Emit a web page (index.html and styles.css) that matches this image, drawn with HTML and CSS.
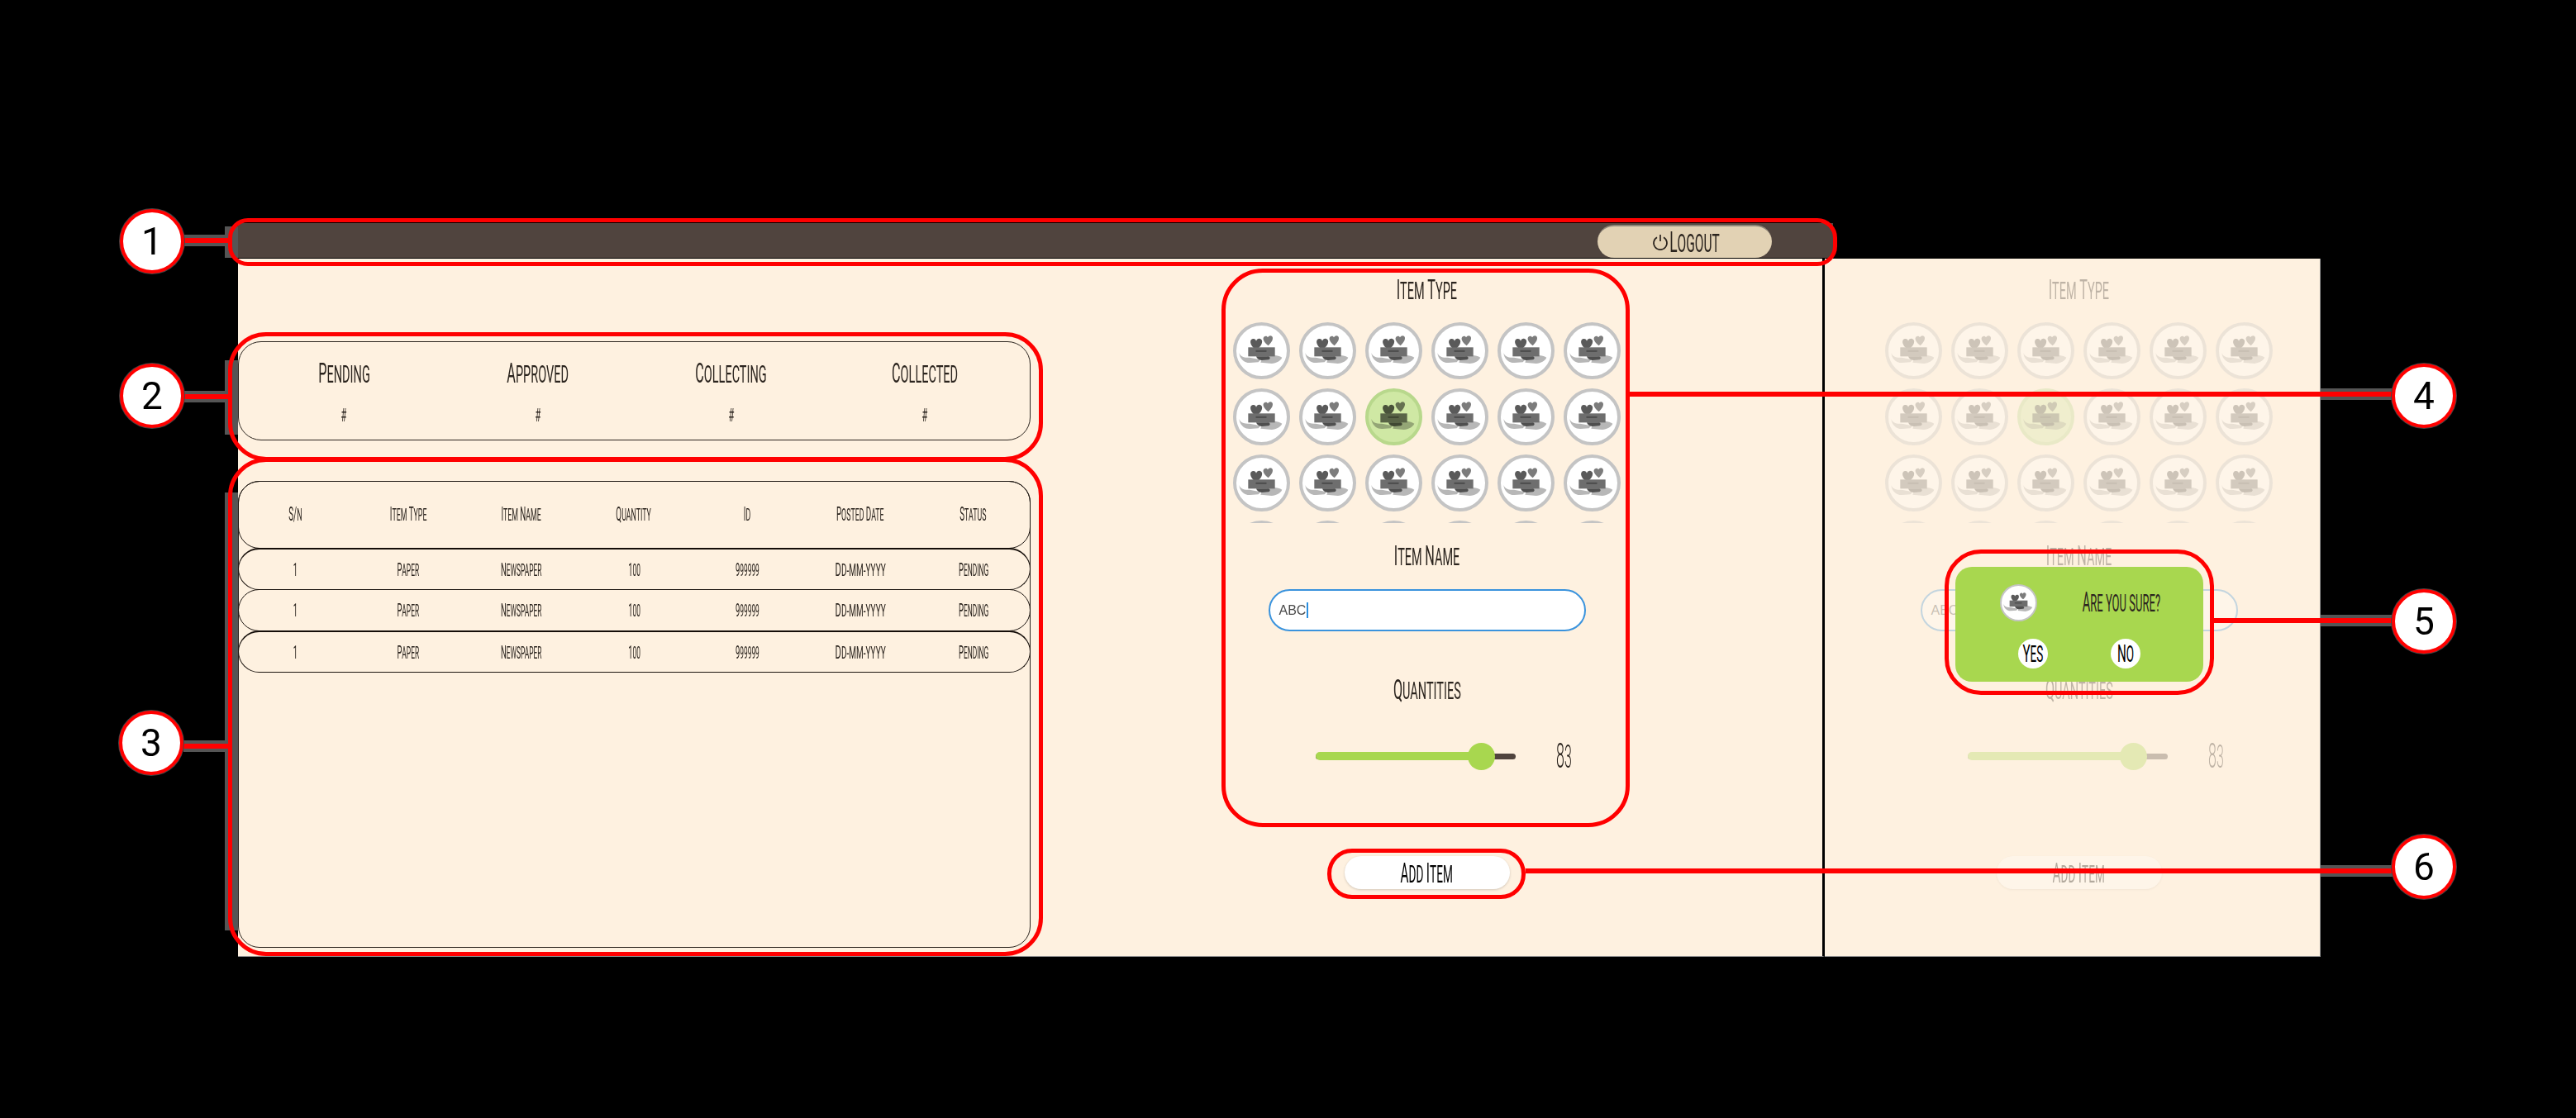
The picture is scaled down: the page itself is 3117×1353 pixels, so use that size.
FILE: index.html
```html
<!DOCTYPE html>
<html lang="en">
<head>
  <meta charset="UTF-8" />
  <title>Recycling - Add Item</title>
  <link rel="stylesheet" href="styles.css">
</head>
<body>
  <svg class="defs" width="0" height="0" aria-hidden="true">
    <symbol id="item-icon" viewBox="12 12 183 183">
      <path fill="#b7b7b7" d="M22 110C26 124 40 130 60 128L100 136 92 145 62 147C42 148 24 134 22 110Z" />
      <path fill="#b7b7b7" d="M178 128C165 120 150 118 132 122L105 132 100 146 140 150C158 148 172 140 178 128Z" />
      <path fill="#5a5a5a" d="M84 100C60 85 58 62 72 60 79 59 83 63 84 68 86 62 92 58 98 60 112 64 106 86 84 100Z" />
      <path fill="#7c7c7c" d="M128 85C112 72 106 60 112 53 118 48 124 50 126 55 130 48 138 47 142 52 148 60 140 74 128 85Z" />
      <rect fill="#6e6e6e" x="55" y="91" width="97" height="33" />
      <rect fill="#4f4f4f" x="82" y="101" width="40" height="7" rx="3" />
      <path fill="#4f4f4f" d="M84 124H128C136 126 136 134 128 136L104 138C94 138 86 132 84 124Z" />
    </symbol>
  </svg>

  <!-- grey fringe round the callouts, only shows on the black part -->
  <div class="halo halo-box-1"></div>
  <div class="halo halo-bar-end"></div>
  <div class="halo halo-box-2"></div>
  <div class="halo halo-box-3"></div>
  <div class="halo halo-line-1"></div>
  <div class="halo halo-line-2"></div>
  <div class="halo halo-line-3"></div>
  <div class="halo halo-line-4"></div>
  <div class="halo halo-line-5"></div>
  <div class="halo halo-line-6"></div>

  <main class="stage">
    <header class="topbar">
      <button class="logout">
        <svg class="power" viewBox="0 0 20 20" aria-hidden="true">
          <path d="M6 4.2A8 8 0 1 0 14 4.2" />
          <path d="M10 1V9" />
        </svg>
        <span class="label-box"><span class="hand hand-logout">Logout</span></span>
      </button>
    </header>
    <div class="topbar-gap"></div>

    <section class="screen screen-main">
      <div class="left-col">
        <div class="stats">
          <div class="stat"><span class="hand hand-lg">Pending</span><span class="hand hand-num">#</span></div>
          <div class="stat"><span class="hand hand-lg">Approved</span><span class="hand hand-num">#</span></div>
          <div class="stat"><span class="hand hand-lg">Collecting</span><span class="hand hand-num">#</span></div>
          <div class="stat"><span class="hand hand-lg">Collected</span><span class="hand hand-num">#</span></div>
        </div>

        <div class="table-box">
          <div class="row row-head">
            <span class="hand hand-head">S/N</span>
            <span class="hand hand-head">Item <span class="cap">T</span>ype</span>
            <span class="hand hand-head">Item <span class="cap">N</span>ame</span>
            <span class="hand hand-head">Quantity</span>
            <span class="hand hand-head">ID</span>
            <span class="hand hand-head">Posted <span class="cap">D</span>ate</span>
            <span class="hand hand-head">Status</span>
          </div>
          <div class="row row-strong">
            <span class="hand hand-cell">1</span>
            <span class="hand hand-cell">Paper</span>
            <span class="hand hand-cell">Newspaper</span>
            <span class="hand hand-cell">100</span>
            <span class="hand hand-cell">999999</span>
            <span class="hand hand-cell hand-date">DD-MM-YYYY</span>
            <span class="hand hand-cell">Pending</span>
          </div>
          <div class="row">
            <span class="hand hand-cell">1</span>
            <span class="hand hand-cell">Paper</span>
            <span class="hand hand-cell">Newspaper</span>
            <span class="hand hand-cell">100</span>
            <span class="hand hand-cell">999999</span>
            <span class="hand hand-cell hand-date">DD-MM-YYYY</span>
            <span class="hand hand-cell">Pending</span>
          </div>
          <div class="row row-strong">
            <span class="hand hand-cell">1</span>
            <span class="hand hand-cell">Paper</span>
            <span class="hand hand-cell">Newspaper</span>
            <span class="hand hand-cell">100</span>
            <span class="hand hand-cell">999999</span>
            <span class="hand hand-cell hand-date">DD-MM-YYYY</span>
            <span class="hand hand-cell">Pending</span>
          </div>
        </div>
      </div>

      <div class="form">
        <div class="field-title title-type"><span class="hand hand-lg">Item <span class="cap">T</span>ype</span></div>
        <div class="icon-grid">
          <div class="type"><svg><use href="#item-icon" /></svg></div>
          <div class="type"><svg><use href="#item-icon" /></svg></div>
          <div class="type"><svg><use href="#item-icon" /></svg></div>
          <div class="type"><svg><use href="#item-icon" /></svg></div>
          <div class="type"><svg><use href="#item-icon" /></svg></div>
          <div class="type"><svg><use href="#item-icon" /></svg></div>
          <div class="type"><svg><use href="#item-icon" /></svg></div>
          <div class="type"><svg><use href="#item-icon" /></svg></div>
          <div class="type selected"><svg><use href="#item-icon" /></svg></div>
          <div class="type"><svg><use href="#item-icon" /></svg></div>
          <div class="type"><svg><use href="#item-icon" /></svg></div>
          <div class="type"><svg><use href="#item-icon" /></svg></div>
          <div class="type"><svg><use href="#item-icon" /></svg></div>
          <div class="type"><svg><use href="#item-icon" /></svg></div>
          <div class="type"><svg><use href="#item-icon" /></svg></div>
          <div class="type"><svg><use href="#item-icon" /></svg></div>
          <div class="type"><svg><use href="#item-icon" /></svg></div>
          <div class="type"><svg><use href="#item-icon" /></svg></div>
          <div class="type"></div><div class="type"></div><div class="type"></div>
          <div class="type"></div><div class="type"></div><div class="type"></div>
        </div>
        <div class="field-title title-name"><span class="hand hand-lg">Item <span class="cap">N</span>ame</span></div>
        <div class="input"><span>ABC</span><i class="caret"></i></div>
        <div class="field-title title-qty"><span class="hand hand-lg">Quantities</span></div>
        <div class="slider-row">
          <div class="track">
            <div class="fill" style="width: 83%"></div>
            <div class="thumb" style="left: 83%"></div>
          </div>
          <div class="qty"><span class="hand hand-qty">83</span></div>
        </div>
        <button class="add-btn"><span class="hand hand-add">Add <span class="cap">I</span>tem</span></button>
      </div>
    </section>

    <section class="screen screen-confirm">
      <div class="form form-dim">
        <div class="field-title title-type"><span class="hand hand-lg">Item <span class="cap">T</span>ype</span></div>
        <div class="icon-grid">
          <div class="type"><svg><use href="#item-icon" /></svg></div>
          <div class="type"><svg><use href="#item-icon" /></svg></div>
          <div class="type"><svg><use href="#item-icon" /></svg></div>
          <div class="type"><svg><use href="#item-icon" /></svg></div>
          <div class="type"><svg><use href="#item-icon" /></svg></div>
          <div class="type"><svg><use href="#item-icon" /></svg></div>
          <div class="type"><svg><use href="#item-icon" /></svg></div>
          <div class="type"><svg><use href="#item-icon" /></svg></div>
          <div class="type selected"><svg><use href="#item-icon" /></svg></div>
          <div class="type"><svg><use href="#item-icon" /></svg></div>
          <div class="type"><svg><use href="#item-icon" /></svg></div>
          <div class="type"><svg><use href="#item-icon" /></svg></div>
          <div class="type"><svg><use href="#item-icon" /></svg></div>
          <div class="type"><svg><use href="#item-icon" /></svg></div>
          <div class="type"><svg><use href="#item-icon" /></svg></div>
          <div class="type"><svg><use href="#item-icon" /></svg></div>
          <div class="type"><svg><use href="#item-icon" /></svg></div>
          <div class="type"><svg><use href="#item-icon" /></svg></div>
          <div class="type"></div><div class="type"></div><div class="type"></div>
          <div class="type"></div><div class="type"></div><div class="type"></div>
        </div>
        <div class="field-title title-name"><span class="hand hand-lg">Item <span class="cap">N</span>ame</span></div>
        <div class="input"><span>ABC</span></div>
        <div class="field-title title-qty"><span class="hand hand-lg">Quantities</span></div>
        <div class="slider-row">
          <div class="track">
            <div class="fill" style="width: 83%"></div>
            <div class="thumb" style="left: 83%"></div>
          </div>
          <div class="qty"><span class="hand hand-qty">83</span></div>
        </div>
        <button class="add-btn"><span class="hand hand-add">Add <span class="cap">I</span>tem</span></button>
      </div>

      <div class="dialog">
        <div class="dialog-top">
          <div class="type type-small"><svg><use href="#item-icon" /></svg></div>
          <div class="dialog-text"><span class="hand hand-lg hand-ask">Are you sure?</span></div>
        </div>
        <div class="dialog-actions">
          <button class="round-btn"><span class="hand hand-round">Yes</span></button>
          <button class="round-btn"><span class="hand hand-round">No</span></button>
        </div>
      </div>
    </section>
  </main>

  <!-- red callouts drawn over the screens -->
  <div class="box box-1"></div>
  <div class="box box-2"></div>
  <div class="box box-3"></div>
  <div class="box box-4"></div>
  <div class="box box-5"></div>
  <div class="box box-6"></div>
  <div class="line line-1"></div>
  <div class="line line-2"></div>
  <div class="line line-3"></div>
  <div class="line line-4"></div>
  <div class="line line-5"></div>
  <div class="line line-6"></div>
  <div class="pin pin-1">1</div>
  <div class="pin pin-2">2</div>
  <div class="pin pin-3">3</div>
  <div class="pin pin-4">4</div>
  <div class="pin pin-5">5</div>
  <div class="pin pin-6">6</div>
</body>
</html>
```

FILE: styles.css
```css
* {
  box-sizing: border-box;
}

body {
  margin: 0;
  width: 3117px;
  height: 1353px;
  position: relative;
  overflow: hidden;
  background: #000;
  font-family: Roboto, sans-serif;
  color: #2b241e;
}

.defs {
  position: absolute;
}

button {
  font-family: inherit;
  color: inherit;
  border: none;
  padding: 0;
}

/* narrow hand lettering: squeezed capitals */
.hand {
  display: inline-block;
  white-space: nowrap;
  text-transform: uppercase;
  transform: scaleX(0.5);
  line-height: 1;
}

.hand::first-letter,
.cap {
  font-size: 1.12em;
}

.hand-lg {
  font-size: 29px;
}

.hand-ask {
  transform: scaleX(0.45);
}

.hand-num {
  font-size: 22px;
}

.hand-head {
  font-size: 21px;
  transform: scaleX(0.42);
}

.hand-cell {
  font-size: 20px;
  transform: scaleX(0.42);
}

.hand-date {
  transform: scaleX(0.5);
}

.hand-qty {
  font-size: 38px;
  font-weight: 300;
  transform: scaleX(0.42);
}

.hand-add {
  font-size: 29px;
  color: #000;
  transform: scaleX(0.47);
}

.hand-logout {
  font-size: 31px;
}

.hand-round {
  font-size: 27px;
  color: #000;
}

.stage {
  position: relative;
  z-index: 1;
  display: grid;
  grid-template-columns: 1920px 600px;
  grid-template-rows: 43px 845px;
  padding: 270px 0 0 288px;
}

.topbar {
  display: flex;
  justify-content: flex-end;
  align-items: flex-end;
  padding-right: 64px;
  background: #50443e;
  border-bottom: 1px solid #000;
}

.logout {
  display: flex;
  align-items: center;
  justify-content: center;
  gap: 4px;
  width: 211px;
  height: 40px;
  background: #e2d2b4;
  border-top: 2px solid #8f8779;
  border-radius: 20px;
}

.power {
  width: 20px;
  height: 20px;
  fill: none;
  stroke: #2b241e;
  stroke-width: 1.7;
}

.label-box {
  display: flex;
  justify-content: center;
  width: 55px;
}

.screen {
  position: relative;
  background: #fef1e0;
  border-bottom: 1px solid #8f8f8f;
}

.screen-main {
  display: grid;
  grid-template-columns: 960px 1fr;
  border-right: 3px solid #000;
}

.screen-confirm {
  border-right: 1px solid #8f8f8f;
  padding-left: 16px;
}

.left-col {
  display: flex;
  flex-direction: column;
  padding: 100px 1px 10px 0;
}

.stats {
  display: grid;
  grid-template-columns: repeat(4, 1fr);
  height: 120px;
  padding: 0 10px;
  border: 1px solid #2b241e;
  border-radius: 28px;
}

.stat {
  display: flex;
  flex-direction: column;
  align-items: center;
  gap: 24px;
  padding-top: 22px;
}

.table-box {
  flex: 1;
  margin-top: 49px;
  border: 1px solid #2b241e;
  border-radius: 26px;
}

.row {
  display: grid;
  grid-template-columns: repeat(7, 1fr);
  align-items: center;
  justify-items: center;
  height: 51px;
  margin: -1px -1px 0;
  border: 1px solid #1c1510;
  border-radius: 26px;
}

.row-head {
  height: 82px;
  margin-top: -1px;
}

.row-strong {
  border-top: 2px solid #140d08;
}

.form {
  display: flex;
  flex-direction: column;
  align-items: center;
}

.form-dim {
  opacity: 0.3;
}

.field-title {
  display: flex;
  justify-content: center;
  align-items: center;
  height: 40px;
}

.title-type {
  margin-top: 18px;
}

.title-name {
  margin-top: 20px;
}

.title-qty {
  margin-top: 51px;
}

.icon-grid {
  display: grid;
  grid-template-columns: repeat(6, 69px);
  grid-auto-rows: 69px;
  gap: 11px;
  height: 243px;
  margin-top: 19px;
  overflow: hidden;
}

.type {
  width: 69px;
  height: 69px;
  background: #fff;
  border: 4px solid #c4c4c4;
  border-radius: 50%;
}

.type svg {
  display: block;
  width: 100%;
  height: 100%;
}

.type.selected {
  background: #cfe8a4;
  border-color: #b8d88c;
}

.type.selected svg {
  mix-blend-mode: multiply;
}

.type-small {
  width: 45px;
  height: 45px;
  border-width: 2px;
}

.input {
  display: flex;
  align-items: center;
  width: 384px;
  height: 51px;
  margin-top: 20px;
  padding-left: 11px;
  background: #fff;
  border: 2px solid #3a93dd;
  border-radius: 26px;
  font-family: "Liberation Sans", sans-serif;
  font-size: 16px;
  color: #4a4a4a;
}

.caret {
  width: 2px;
  height: 19px;
  margin-left: 1px;
  background: #2a8fe0;
}

.slider-row {
  display: flex;
  align-items: center;
  gap: 39px;
  width: 384px;
  height: 34px;
  margin-top: 43px;
  padding-left: 57px;
}

.track {
  position: relative;
  display: flex;
  align-items: center;
  width: 242px;
  height: 7px;
  background: #50443e;
  border-radius: 4px;
}

.fill {
  height: 10px;
  background: #a8d74f;
  border-radius: 5px 0 0 5px;
}

.thumb {
  position: absolute;
  top: -13px;
  width: 33px;
  height: 33px;
  margin-left: -16px;
  background: #a8d74f;
  border-radius: 50%;
}

.qty {
  display: flex;
  justify-content: center;
  width: 40px;
}

.add-btn {
  display: flex;
  justify-content: center;
  align-items: center;
  width: 200px;
  height: 40px;
  margin-top: 104px;
  padding-top: 2px;
  background: #fff;
  border-radius: 20px;
  box-shadow: 0 1px 3px rgb(0 0 0 / 0.18);
}

.dialog {
  position: absolute;
  left: 158px;
  top: 373px;
  width: 300px;
  height: 139px;
  padding-top: 21px;
  background: #a8d74f;
  border-radius: 20px;
}

.dialog-top {
  display: flex;
  align-items: center;
  padding-left: 54px;
}

.dialog-text {
  display: flex;
  justify-content: center;
  width: 120px;
  margin-left: 42px;
}

.dialog-actions {
  display: flex;
  gap: 76px;
  margin-top: 21px;
  padding-left: 76px;
}

.round-btn {
  display: flex;
  justify-content: center;
  align-items: center;
  width: 36px;
  height: 36px;
  background: #fff;
  border-radius: 50%;
}

/* callouts */
.box,
.line,
.pin,
.halo {
  position: absolute;
}

.box {
  z-index: 2;
  border: 5px solid #f00;
}

.box-1 { left: 276px; top: 264px; width: 1947px; height: 58px; border-radius: 24px; }
.box-2 { left: 276px; top: 402px; width: 986px; height: 156px; border-radius: 46px; }
.box-3 { left: 276px; top: 554px; width: 986px; height: 603px; border-radius: 46px; }
.box-4 { left: 1478px; top: 325px; width: 494px; height: 676px; border-radius: 50px; }
.box-5 { left: 2353px; top: 665px; width: 326px; height: 176px; border-radius: 44px; }
.box-6 { left: 1606px; top: 1027px; width: 240px; height: 61px; border-radius: 30px; }

.line {
  z-index: 2;
  height: 6px;
  background: #f00;
}

.line-1 { left: 222px; top: 288px; width: 54px; }
.line-2 { left: 222px; top: 477px; width: 54px; }
.line-3 { left: 222px; top: 900px; width: 56px; }
.line-4 { left: 1972px; top: 474px; width: 924px; }
.line-5 { left: 2679px; top: 748px; width: 217px; }
.line-6 { left: 1846px; top: 1051px; width: 1050px; }

.pin {
  z-index: 3;
  display: flex;
  justify-content: center;
  align-items: center;
  width: 78px;
  height: 78px;
  background: #fff;
  border: 4px solid #f00;
  border-radius: 50%;
  box-shadow: 0 0 0 1px #444;
  font-size: 46px;
  color: #000;
}

.pin-1 { left: 145px; top: 253px; }
.pin-2 { left: 145px; top: 440px; }
.pin-3 { left: 144px; top: 860px; }
.pin-4 { left: 2894px; top: 440px; }
.pin-5 { left: 2894px; top: 713px; }
.pin-6 { left: 2894px; top: 1010px; }

/* sits under the stage */
.halo {
  z-index: 0;
  background: #555;
}

.halo-box-1 { left: 272px; top: 274px; width: 24px; height: 38px; }
.halo-bar-end { left: 2200px; top: 270px; width: 18px; height: 42px; background: #50443e; }
.halo-box-2 { left: 272px; top: 436px; width: 24px; height: 90px; }
.halo-box-3 { left: 272px; top: 596px; width: 24px; height: 530px; }
.halo-line-1 { left: 222px; top: 284px; width: 54px; height: 14px; }
.halo-line-2 { left: 222px; top: 473px; width: 54px; height: 14px; }
.halo-line-3 { left: 222px; top: 896px; width: 56px; height: 14px; }
.halo-line-4 { left: 2800px; top: 470px; width: 96px; height: 14px; }
.halo-line-5 { left: 2800px; top: 744px; width: 96px; height: 14px; }
.halo-line-6 { left: 2800px; top: 1047px; width: 96px; height: 14px; }
```
